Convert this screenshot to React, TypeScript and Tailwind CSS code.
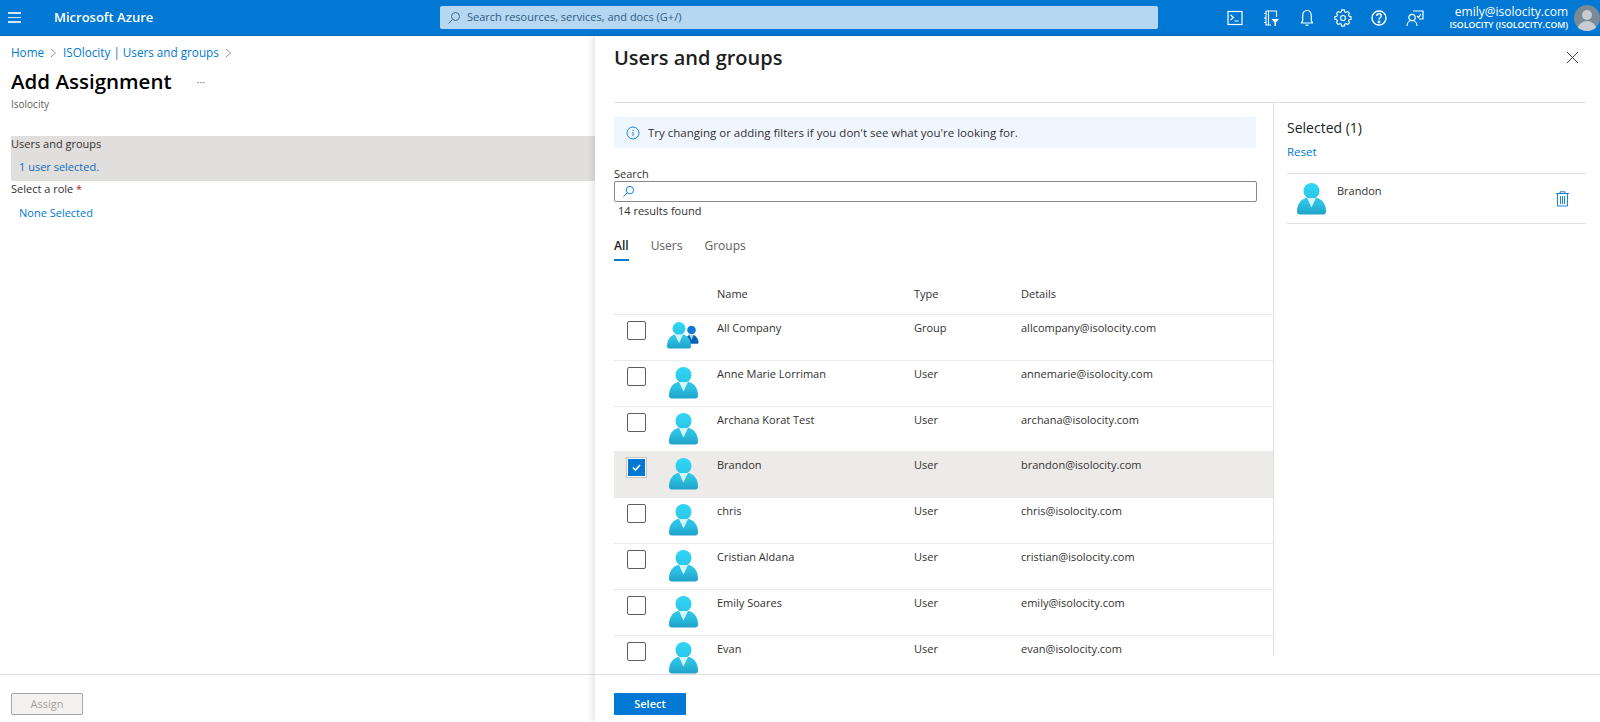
import { useId } from "react";

const font = { fontFamily: '"Open Sans", "Noto Sans", sans-serif' };

type Row = { name: string; type: string; details: string; checked?: boolean; group?: boolean };

const rows: Row[] = [
  { name: "All Company", type: "Group", details: "allcompany@isolocity.com", group: true },
  { name: "Anne Marie Lorriman", type: "User", details: "annemarie@isolocity.com" },
  { name: "Archana Korat Test", type: "User", details: "archana@isolocity.com" },
  { name: "Brandon", type: "User", details: "brandon@isolocity.com", checked: true },
  { name: "chris", type: "User", details: "chris@isolocity.com" },
  { name: "Cristian Aldana", type: "User", details: "cristian@isolocity.com" },
  { name: "Emily Soares", type: "User", details: "emily@isolocity.com" },
  { name: "Evan", type: "User", details: "evan@isolocity.com" },
];

// Azure style user glyph
const UserIcon = () => {
  const id = useId();
  return (
    <svg width="29" height="32" viewBox="0 0 29 32">
      <defs>
        <linearGradient id={id} gradientUnits="userSpaceOnUse" x1="0" y1="0" x2="0" y2="32">
          <stop offset="0" stopColor="#30d6f7" />
          <stop offset="0.65" stopColor="#2cc0e2" />
          <stop offset="1" stopColor="#1f9fc9" />
        </linearGradient>
      </defs>
      <circle cx="14.500" cy="8" r="8" fill={`url(#${id})`} />
      <path d="M0 28.500c0-7 3.500-12 9-13.500h11c5.500 1.500 9 6.500 9 13.500 0 1.800-1 3-2.800 3H2.800C1 31.500 0 30.300 0 28.500z" fill={`url(#${id})`} />
      <path d="M10 15h9L14.500 24.500z" fill="#d5f5fc" />
    </svg>
  );
};

const GroupIcon = () => {
  const id = useId();
  return (
    <svg width="32" height="27" viewBox="0 0 32 27">
      <defs>
        <linearGradient id={id} gradientUnits="userSpaceOnUse" x1="0" y1="0" x2="0" y2="27">
          <stop offset="0" stopColor="#30d6f7" />
          <stop offset="0.65" stopColor="#2cc0e2" />
          <stop offset="1" stopColor="#1f9fc9" />
        </linearGradient>
      </defs>
      <circle cx="24.500" cy="8" r="4.300" fill="#0f7ad8" />
      <path d="M18 20.500c0-4 2.500-7 4.500-7.500h4c2 .5 5 3.500 5 7.500 0 .8-.5 1.300-1.300 1.300H19.300C18.500 21.800 18 21.300 18 20.500z" fill="#0a62b4" />
      <path d="M22.500 13h4l-2 5z" fill="#a9d6f5" />
      <circle cx="12" cy="6.500" r="6.500" fill={`url(#${id})`} />
      <path d="M0 24.500c0-6.500 3-10.500 7.500-12h9c4.500 1.500 7.500 5.500 7.500 12 0 1.300-.8 2-2 2H2c-1.200 0-2-.7-2-2z" fill={`url(#${id})`} />
      <path d="M7.800 12.500h8.400L12 21z" fill="#d5f5fc" />
    </svg>
  );
};

const HeaderIcons = () => (
  <div className="flex items-center gap-[16px] text-white">
    <svg width="20" height="20" viewBox="0 0 20 20" fill="none" stroke="currentColor">
      <rect x="3" y="3.500" width="14" height="13" strokeWidth="1.200" />
      <path d="M5.500 7l3 2.500-3 2.500M9.500 13h4" strokeWidth="1.200" />
    </svg>
    <svg width="20" height="20" viewBox="0 0 20 20" fill="none" stroke="currentColor" strokeWidth="1.100">
      <path d="M5 3h10.500v6M5 3v14h5M7.500 3v14M3 5.500h2M3 10h2M3 14.500h2" />
      <path d="M10.500 11h7.500l-3 3.500V18h-1.500v-3.500z" fill="currentColor" stroke="none" />
    </svg>
    <svg width="20" height="20" viewBox="0 0 20 20" fill="none" stroke="currentColor" strokeWidth="1.200">
      <path d="M10 2.500c-3 0-4.300 2.500-4.300 5.500v4.500L4.500 15h11l-1.200-2.500V8c0-3-1.300-5.500-4.300-5.500zM8.500 17.200h3" />
    </svg>
    <svg width="20" height="20" viewBox="0 0 26 26" fill="none" stroke="currentColor" strokeWidth="1.500">
      <path d="M11.300 3.500h3.400l.5 2.500 1.700.8 2.200-1.300 2.400 2.400-1.300 2.200.8 1.700 2.500.5v3.400l-2.500.5-.8 1.700 1.300 2.200-2.400 2.400-2.200-1.300-1.700.8-.5 2.500h-3.400l-.5-2.500-1.700-.8-2.200 1.300-2.400-2.400 1.300-2.200-.8-1.700-2.500-.5v-3.400l2.500-.5.8-1.700-1.300-2.200 2.400-2.400 2.200 1.300 1.700-.8z" transform="translate(0 -1)" />
      <circle cx="13" cy="13" r="3.200" />
    </svg>
    <svg width="20" height="20" viewBox="0 0 20 20" fill="none" stroke="currentColor" strokeWidth="1.400">
      <circle cx="10" cy="10" r="7" />
      <path d="M7.800 8c0-1.300 1-2.200 2.200-2.200s2.200.9 2.200 2.100c0 1.900-2.200 1.900-2.200 3.700" />
      <circle cx="10" cy="14" r=".7" fill="currentColor" />
    </svg>
    <svg width="20" height="20" viewBox="0 0 20 20" fill="none" stroke="currentColor" strokeWidth="1.200">
      <path d="M8 3h10v8h-4M12 8l1.500 1.500L16 6" />
      <circle cx="7" cy="9.500" r="3.200" />
      <path d="M2 18c0-3 2-5.500 5-5.500s5 2.500 5 5.500" />
    </svg>
  </div>
);

const Header = () => (
  <header className="flex h-[36px] shrink-0 items-center border-b border-[#0a6cbd] bg-[#0078d4] text-white">
    <div className="flex w-[54px] shrink-0 flex-col gap-[3px] pl-[8px]">
      <span className="block h-[1.500px] w-[13px] bg-[#cfe6f7]" />
      <span className="block h-[1.500px] w-[13px] bg-[#cfe6f7]" />
      <span className="block h-[1.500px] w-[13px] bg-[#cfe6f7]" />
    </div>
    <div className="w-[386px] shrink-0 text-[13px] font-semibold">Microsoft Azure</div>
    <div className="flex h-[23px] w-[718px] shrink-0 items-center gap-[6px] rounded-[2px] bg-[#b5d7f2] pl-[7px] text-[11px] text-[#2d5c84]">
      <svg width="14" height="14" viewBox="0 0 14 14" fill="none" stroke="#3a6f9c" strokeWidth="1">
        <circle cx="8.500" cy="5.500" r="4" />
        <path d="M5.500 8.500L1.500 12.500" />
      </svg>
      Search resources, services, and docs (G+/)
    </div>
    <div className="ml-[67px]">
      <HeaderIcons />
    </div>
    <div className="ml-auto flex items-center gap-[6px]">
      <div className="flex flex-col items-end leading-none">
        <span className="text-[12px]">emily@isolocity.com</span>
        <span className="mt-[3px] text-[8.700px] font-semibold">ISOLOCITY (ISOLOCITY.COM)</span>
      </div>
      <div className="relative h-[26px] w-[26px] overflow-hidden rounded-full bg-[#7a8a96]">
        <div className="mx-auto mt-[5px] h-[10px] w-[10px] rounded-full bg-[#c8ccd0]" />
        <div className="mx-auto mt-[1px] h-[10px] w-[20px] rounded-t-full bg-[#c8ccd0]" />
      </div>
    </div>
  </header>
);

const Chevron = () => (
  <svg width="7" height="10" viewBox="0 0 7 10" fill="none" stroke="#8a8886" strokeWidth="0.900">
    <path d="M1 1l4.500 4L1 9" />
  </svg>
);

const LeftBlade = () => (
  <div className="flex w-[595px] shrink-0 flex-col">
    <div className="flex-1 pl-[11px]">
      <div className="mt-[8px] flex items-center gap-[6px] text-[11.700px] text-[#0078d4]">
        <span>Home</span>
        <Chevron />
        <span>ISOlocity | Users and groups</span>
        <Chevron />
      </div>
      <div className="mt-[4px] flex items-center">
        <h1 className="text-[20.500px] font-semibold leading-[31px] text-black">Add Assignment</h1>
        <span className="ml-[25px] text-[11px] leading-none text-[#777]">···</span>
      </div>
      <div className="text-[10px] leading-[14px] text-[#605e5c]">Isolocity</div>
      <div className="mt-[25px] h-[45px] bg-[#e1dfdd] text-[11px]">
        <div className="leading-[16px] text-[#323130]">Users and groups</div>
        <div className="mt-[7px] pl-[8px] leading-[16px] text-[#0f6cbd]">1 user selected.</div>
      </div>
      <div className="text-[11px] leading-[16px] text-[#323130]">
        Select a role <span className="text-[#a4262c]">*</span>
      </div>
      <div className="mt-[8px] pl-[8px] text-[11px] leading-[16px] text-[#0078d4]">None Selected</div>
    </div>
    <div className="flex h-[48px] shrink-0 items-start border-t border-[#e1dfdd] pl-[11px] pt-[18px]">
      <div className="flex h-[22px] w-[72px] items-center justify-center rounded-[2px] border border-[#a6a6a6] bg-[#f3f2f1] text-[11px] text-[#a19f9d]">
        Assign
      </div>
    </div>
  </div>
);

const Checkbox = ({ checked }: { checked?: boolean }) =>
  checked ? (
    <div className="flex h-[19px] w-[19px] items-center justify-center border border-white bg-[#0078d4] outline outline-[#c8c6c4]">
      <svg width="11" height="11" viewBox="0 0 11 11" fill="none" stroke="#fff" strokeWidth="1.600">
        <path d="M2 5.500l2.500 2.500L9 3" />
      </svg>
    </div>
  ) : (
    <div className="h-[19px] w-[19px] rounded-[2px] border border-[#605e5c]" />
  );

const UserRow = ({ row }: { row: Row }) => (
  <div
    className={`grid h-[45.800px] shrink-0 grid-cols-[103px_197px_107px_1fr] border-b border-[#edebe9] text-[11px] leading-[16px] text-[#323130] ${
      row.checked ? "bg-[#edebe9]" : ""
    }`}
  >
    <div className="flex">
      <div className="ml-[13px] mt-[6px]">
        <Checkbox checked={row.checked} />
      </div>
      <div className={row.group ? "ml-[21px] mt-[7px]" : "ml-[23px] mt-[6px]"}>
        {row.group ? <GroupIcon /> : <UserIcon />}
      </div>
    </div>
    <div className="pt-[5px]">{row.name}</div>
    <div className="pt-[5px]">{row.type}</div>
    <div className="pt-[5px]">{row.details}</div>
  </div>
);

const RightBlade = () => (
  <div className="flex min-w-0 flex-1 flex-col bg-white shadow-[-3px_0_6px_rgba(0,0,0,0.1)]">
    <div className="flex-1 overflow-hidden pl-[19px] pr-[14px]">
      <div className="flex h-[67px] items-start justify-between border-b border-[#e1dfdd] pt-[8px]">
        <h2 className="text-[20px] font-semibold leading-[28px] text-[#201f1e]">Users and groups</h2>
        <svg className="mr-[7px] mt-[7px]" width="13" height="13" viewBox="0 0 13 13" stroke="#444" strokeWidth="1">
          <path d="M1 1l11 11M12 1L1 12" />
        </svg>
      </div>
      <div className="flex">
        <div className="w-[659px] shrink-0">
          <div className="mt-[14px] flex h-[31px] w-[642px] items-center gap-[8px] bg-[#f0f6ff] pl-[12px] text-[11.500px] text-[#323130]">
            <svg width="14" height="14" viewBox="0 0 14 14" fill="none" stroke="#0078d4">
              <circle cx="7" cy="7" r="6" strokeWidth="0.900" />
              <path d="M7 6v4M7 3.800v1" strokeWidth="0.900" />
            </svg>
            Try changing or adding filters if you don't see what you're looking for.
          </div>
          <div className="mt-[18px] text-[11px] leading-[15px] text-[#323130]">Search</div>
          <div className="flex h-[21px] w-[643px] items-center rounded-[2px] border border-[#8a8886] pl-[7px]">
            <svg width="13" height="13" viewBox="0 0 14 14" fill="none" stroke="#0078d4" strokeWidth="1">
              <circle cx="8.500" cy="5.500" r="4" />
              <path d="M5.500 8.500L1.500 12.500" />
            </svg>
          </div>
          <div className="pl-[4px] pt-[1px] text-[11px] leading-[16px] text-[#323130]">14 results found</div>
          <div className="mt-[18px] flex gap-[22px] text-[12px] leading-[17px] text-[#605e5c]">
            <div className="relative text-[#201f1e]">
              <span className="font-semibold">All</span>
              <span className="absolute -bottom-[7px] left-0 h-[2px] w-full bg-[#0078d4]" />
            </div>
            <span>Users</span>
            <span>Groups</span>
          </div>
          <div className="mt-[25px] grid h-[36px] grid-cols-[103px_197px_107px_1fr] border-b border-[#edebe9] pt-[7px] text-[11px] font-medium leading-[16px] text-[#323130]">
            <span />
            <span>Name</span>
            <span>Type</span>
            <span>Details</span>
          </div>
          <div className="flex flex-col">
            {rows.map((row) => (
              <UserRow key={row.name} row={row} />
            ))}
          </div>
        </div>
        <div className="h-[553px] flex-1 border-l border-[#e1dfdd] pl-[13px]">
          <div className="mt-[15px] text-[14px] leading-[20px] text-[#201f1e]">Selected (1)</div>
          <div className="mt-[6px] text-[11.500px] leading-[16px] text-[#0078d4]">Reset</div>
          <div className="mt-[13px] flex h-[51px] border-y border-[#e1dfdd]">
            <div className="ml-[10px] mt-[9px]">
              <UserIcon />
            </div>
            <div className="ml-[11px] mt-[9px] text-[11px] leading-[16px] text-[#323130]">Brandon</div>
            <svg className="ml-auto mr-[17px] mt-[17px]" width="13" height="16" viewBox="0 0 13 16" fill="none" stroke="#0078d4" strokeWidth="0.900">
              <path d="M0 2.500h13M4 2.500V.8h5v1.700M1.500 2.500v12.500h10V2.500M4.500 5v8M6.500 5v8M8.500 5v8" />
            </svg>
          </div>
        </div>
      </div>
    </div>
    <div className="flex h-[48px] shrink-0 items-start border-t border-[#e1dfdd] pl-[19px] pt-[18px]">
      <div className="flex h-[22px] w-[72px] items-center justify-center rounded-[1px] bg-[#0078d4] text-[11px] font-semibold text-white">
        Select
      </div>
    </div>
  </div>
);

export default function App() {
  return (
    <div className="flex h-[722px] w-[1600px] flex-col overflow-hidden bg-white" style={font}>
      <Header />
      <div className="flex min-h-0 flex-1">
        <LeftBlade />
        <RightBlade />
      </div>
    </div>
  );
}
